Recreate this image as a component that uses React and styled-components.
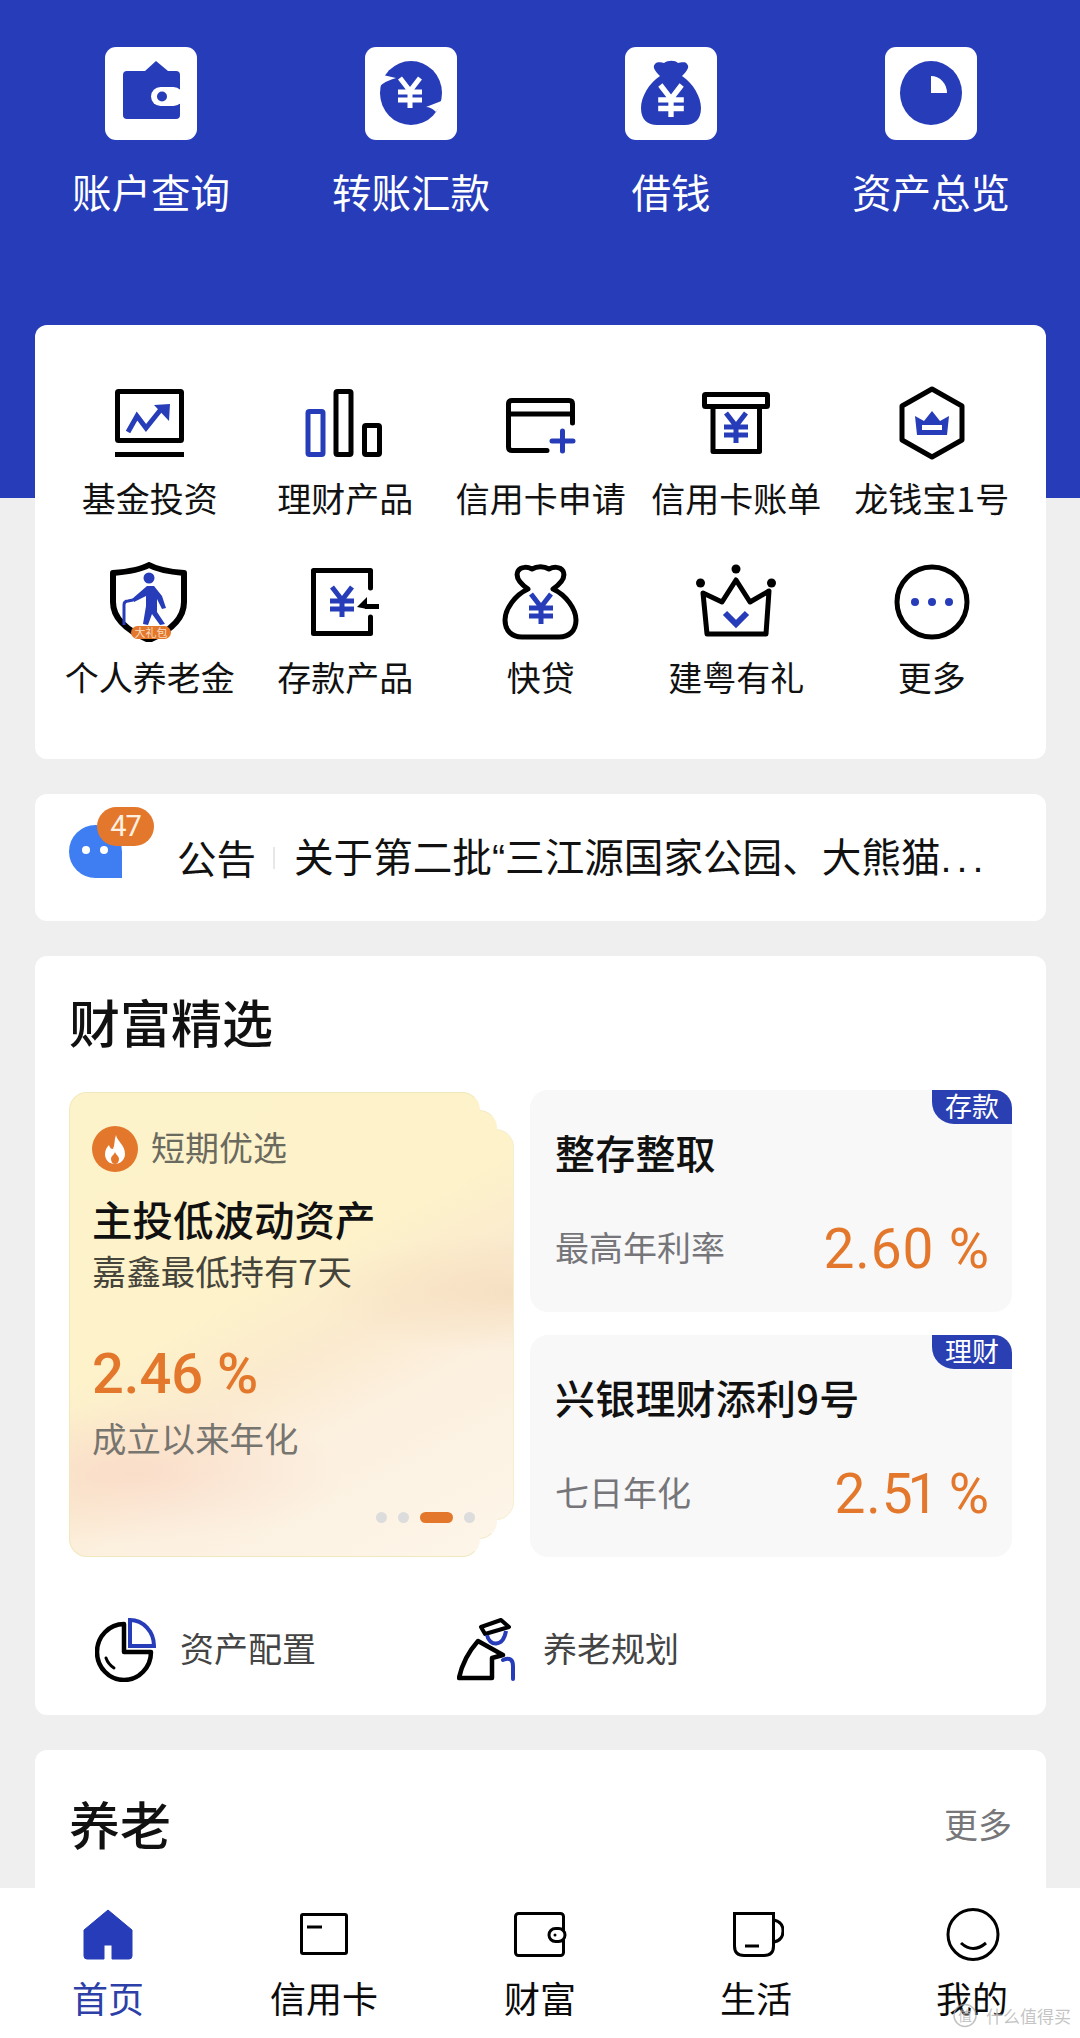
import React from 'react'
import styled, { createGlobalStyle, css } from 'styled-components'

const BLUE = '#263cb8'
const INK = '#0b0b0b'
const ORANGE = '#e3782c'

const GlobalStyle = createGlobalStyle`
  html, body {
    margin: 0;
    padding: 0;
    overflow: hidden;
  }
  body {
    font-family: "Noto Sans CJK SC", "Noto Sans", sans-serif;
  }
`

const Page = styled.div`
  position: relative;
  width: 1080px;
  height: 2038px;
  overflow: hidden;
  padding-top: 47px;
  box-sizing: border-box;
  background: linear-gradient(${BLUE} 0, ${BLUE} 498px, #efefef 498px);
`

const QuickRow = styled.div`
  display: grid;
  grid-template-columns: repeat(4, 260px);
  padding-left: 21px;
  margin-bottom: 112.5px;
`

const QuickItem = styled.div`
  display: flex;
  flex-direction: column;
  align-items: center;
`

const QuickTile = styled.div`
  width: 92px;
  height: 93px;
  border-radius: 11px;
  background: #fff;
  margin-bottom: 28.5px;

  svg {
    display: block;
  }
`

const QuickLabel = styled.div`
  font-size: 39.5px;
  line-height: 44px;
  color: #fff;
  white-space: nowrap;
`

const Card = styled.section`
  margin: 0 34px 35px 35px;
  width: 1011px;
  border-radius: 12px;
  background: #fff;
  box-sizing: border-box;
`

const MenuCard = styled(Card)`
  display: grid;
  grid-template-columns: repeat(5, 195.5px);
  row-gap: 42.5px;
  padding: 58px 0 0 17px;
  height: 434px;
  align-content: start;
`

const MenuItem = styled.div`
  display: flex;
  flex-direction: column;
  align-items: center;
  gap: 12.5px;

  svg {
    display: block;
  }
`

const MenuLabel = styled.div`
  font-size: 34px;
  line-height: 44px;
  color: #111;
  white-space: nowrap;
`

const NoticeCard = styled(Card)`
  display: flex;
  align-items: center;
  height: 127px;
  padding-left: 34px;
`

const Bubble = styled.div`
  position: relative;
  flex: none;
  width: 53px;
  height: 53px;
  margin: 31px 55px 0 0;
  border-radius: 50% 50% 0 50%;
  background: #3f7ef2;
  align-self: flex-start;

  &::before,
  &::after {
    content: '';
    position: absolute;
    top: 21px;
    width: 8px;
    height: 8px;
    border-radius: 50%;
    background: #fff;
  }
  &::before {
    left: 13px;
  }
  &::after {
    left: 31px;
  }
`

const Badge = styled.div`
  position: absolute;
  z-index: 1;
  left: 28px;
  top: -18px;
  width: 57px;
  height: 39px;
  border-radius: 20px;
  background: ${ORANGE};
  color: #fdf0e2;
  font-family: "Roboto", sans-serif;
  font-size: 29px;
  letter-spacing: -1px;
  line-height: 39px;
  text-align: center;
`

const NoticeTag = styled.div`
  font-size: 39.5px;
  line-height: 50px;
  padding-bottom: 2px;
  color: #111;
  white-space: nowrap;
`

const NoticeBar = styled.div`
  flex: none;
  width: 2px;
  height: 22px;
  margin: 0 19px 0 17px;
  background: #e8e8e8;
`

const NoticeText = styled.div`
  font-size: 39.6px;
  line-height: 50px;
  padding-bottom: 2px;
  color: #111;
  white-space: nowrap;
`

const Quote = styled.span`
  font-family: "Liberation Sans", sans-serif;
`

const Dots = styled.span`
  font-family: "Liberation Sans", sans-serif;
  letter-spacing: 5px;
`

const WealthCard = styled(Card)`
  height: 759px;
  padding: 33px 34px 0 34px;
`

const CardTitle = styled.h2`
  margin: 0;
  font-size: 51px;
  font-weight: 500;
  line-height: 64px;
  color: #111;
`

const Picks = styled.div`
  display: grid;
  grid-template-columns: 411px 482px;
  column-gap: 50px;
  margin-top: 37px;
`

// one gradient shared by the card and the two sheets behind it, so the colour runs on across them
const promoFill = css`
  background-image:
    radial-gradient(ellipse 210px 70px at 15% 82%, rgba(249, 213, 196, 0.6), transparent),
    radial-gradient(ellipse 200px 60px at 100% 43%, rgba(244, 218, 186, 0.7), transparent),
    linear-gradient(152deg, #fdf3ca 0%, #fdf2ca 42%, #fbeacf 56%, #fcf0df 68%, #fdf6ea 100%);
  background-size: 445px 465px;
  background-repeat: no-repeat;
`

const PromoStack = styled.div`
  position: relative;
  isolation: isolate;
  height: 465px;
  margin-top: 2px;

  &::before,
  &::after {
    content: '';
    position: absolute;
    left: 0;
    border-radius: 18px;
    box-sizing: border-box;
    ${promoFill}
  }
  &::before {
    z-index: -1;
    top: 18px;
    width: 428px;
    height: 429px;
    background-position: 0 -18px;
    border: 1px solid #f3ebc6;
    border-right-color: transparent;
  }
  &::after {
    z-index: -2;
    top: 37px;
    width: 445px;
    height: 391px;
    background-position: 0 -37px;
    border: 1px solid #f5eecf;
  }
`

const Promo = styled.div`
  position: relative;
  height: 465px;
  padding: 33px 4px 0 22px;
  box-sizing: border-box;
  border: 1px solid #f1e8bd;
  border-right-color: transparent;
  border-radius: 18px;
  ${promoFill}
`

const PromoHead = styled.div`
  display: flex;
  align-items: center;
  gap: 13px;
  height: 46px;
  font-size: 34px;
  color: #6b6a5f;

  svg {
    display: block;
    flex: none;
  }
`

const RaisedText = styled.span`
  padding-bottom: 5px;
`

const PromoTitle = styled.div`
  margin-top: 21px;
  font-size: 40.5px;
  font-weight: 500;
  line-height: 52px;
  color: #111;
`

const PromoSub = styled.div`
  margin-top: 3px;
  font-size: 34.4px;
  line-height: 44px;
  color: #45443a;
`

const PromoRate = styled.div`
  margin-top: 46.5px;
  font-family: "Roboto", sans-serif;
  font-size: 56px;
  font-weight: 500;
  line-height: 70px;
  color: ${ORANGE};
`

const PromoCaption = styled.div`
  margin-top: 6.5px;
  font-size: 34.4px;
  line-height: 44px;
  color: #77756f;
`

const Pager = styled.div`
  display: flex;
  justify-content: flex-end;
  align-items: center;
  gap: 11px;
  margin-top: 52.5px;
`

const PagerDot = styled.span`
  width: ${(p) => (p.$active ? '33px' : '11px')};
  height: 11px;
  border-radius: 6px;
  background: ${(p) => (p.$active ? ORANGE : '#dcdcdc')};
`

const RateStack = styled.div`
  display: flex;
  flex-direction: column;
  gap: 23px;
`

const RateCard = styled.div`
  position: relative;
  height: 222px;
  padding: 35.5px 22px 0 25px;
  box-sizing: border-box;
  border-radius: 18px;
  background: #f8f8f8;
`

const RateTag = styled.div`
  position: absolute;
  top: 0;
  right: 0;
  width: 80px;
  height: 34px;
  border-radius: 0 18px 0 22px;
  background: #2a3fb2;
  color: #fff;
  font-size: 27px;
  line-height: 32px;
  text-align: center;
`

const RateTitle = styled.div`
  font-size: 40px;
  font-weight: 500;
  letter-spacing: 0.2px;
  line-height: 52px;
  color: #111;
`

const RateRow = styled.div`
  display: flex;
  justify-content: space-between;
  align-items: center;
  margin-top: 36.5px;
`

const RateLabel = styled.div`
  font-size: 34px;
  line-height: 44px;
  padding-bottom: 5px;
  color: #76767a;
`

const RateValue = styled.div`
  font-family: "Roboto", sans-serif;
  font-size: 55px;
  letter-spacing: 0.9px;
  line-height: 70px;
  color: ${ORANGE};
`

const NarrowOne = styled.span`
  margin: 0 -5px 0 -6px;
`

const LinkRow = styled.div`
  display: grid;
  grid-template-columns: 362px 362px;
  margin-top: 61px;
  padding-left: 26px;
`

const LinkItem = styled.div`
  display: flex;
  align-items: center;
  gap: ${(p) => p.$gap}px;
  font-size: 34px;
  color: #444;

  svg {
    display: block;
    flex: none;
  }
`

const PensionCard = styled(Card)`
  height: 300px;
  padding: 41px 34px 0 34px;
`

const PensionHead = styled.div`
  display: flex;
  justify-content: space-between;
  align-items: center;
`

const MoreLink = styled.div`
  font-size: 34px;
  color: #77777a;
`

const Nav = styled.nav`
  position: absolute;
  left: 0;
  bottom: 0;
  display: grid;
  grid-template-columns: repeat(5, 216px);
  width: 1080px;
  height: 150px;
  padding-top: 18px;
  box-sizing: border-box;
  background: #fff;
`

const NavItem = styled.div`
  display: flex;
  flex-direction: column;
  align-items: center;
  gap: 13px;
  font-size: 36px;
  line-height: 44px;
  color: ${(p) => (p.$active ? '#2c40a8' : INK)};

  svg {
    display: block;
  }
`

const Watermark = styled.div`
  position: absolute;
  right: 9px;
  bottom: 10px;
  display: flex;
  align-items: center;
  gap: 9px;
  font-size: 17px;
  line-height: 22px;
  color: rgba(170, 170, 170, 0.7);
  text-shadow: 0 0 2px #fff;
`

const Yen = ({ x, y, h = 30, color = BLUE, sw = 5 }) => {
  const s = h / 30
  return (
    <path
      transform={`translate(${x} ${y}) scale(${s})`}
      d="M-10 -15 L0 -2 L10 -15 M-12 -1 H12 M-12 7 H12 M0 -2 V15"
      fill="none"
      stroke={color}
      strokeWidth={sw}
    />
  )
}

const TileIcon = ({ children }) => (
  <svg width="92" height="93" viewBox="0 0 92 93">
    {children}
  </svg>
)

const WalletTile = () => (
  <TileIcon>
    <path d="M51 14 L63 24 H40 Z" fill={BLUE} />
    <rect x="18" y="24" width="57" height="48" rx="4" fill={BLUE} />
    <rect x="46" y="40" width="32" height="19" rx="9.5" fill="#fff" />
    <circle cx="57" cy="49.5" r="5" fill={BLUE} />
  </TileIcon>
)

const TransferTile = () => (
  <TileIcon>
    <ellipse cx="46" cy="46" rx="31" ry="32" fill={BLUE} />
    <path d="M31 31 L18 28 L12 41 Q22 33 31 31 Z" fill="#fff" />
    <path d="M61 60 L79 53 L71 65 Q66 60 61 60 Z" fill="#fff" />
    <Yen x={45} y={46} color="#fff" sw={5} />
  </TileIcon>
)

const BagTile = () => (
  <TileIcon>
    <path
      d="M35 29 C30 24 27 20 30 17 C33 14 37 16 39 16 C43 13 50 13 53 16 C55 16 60 14 62 17 C65 20 62 24 57 29 C68 36 76 50 76 61 C76 73 69 78 60 78 H32 C23 78 16 73 16 61 C16 50 24 36 35 29 Z"
      fill={BLUE}
    />
    <Yen x={46} y={54} h={32} color="#fff" sw={5} />
  </TileIcon>
)

const PieTile = () => (
  <TileIcon>
    <ellipse cx="46" cy="46" rx="31" ry="32" fill={BLUE} />
    <path d="M46 29 A16 17 0 0 1 62 46 H46 Z" fill="#fff" />
  </TileIcon>
)

const MenuIcon = ({ children }) => (
  <svg width="80" height="80" viewBox="0 0 80 80" fill="none">
    {children}
  </svg>
)

const ChartIcon = () => (
  <MenuIcon>
    <rect x="7.5" y="8.5" width="64" height="49" rx="1" stroke="#000" strokeWidth="5" />
    <rect x="5" y="69" width="69" height="5" fill="#000" />
    <path d="M18 49 L27 33 L36 45 L52 25" stroke={BLUE} strokeWidth="5" />
    <path d="M44 22 L60 21 L59 38 Z" fill={BLUE} />
  </MenuIcon>
)

const BarsIcon = () => (
  <MenuIcon>
    <rect x="3" y="28.5" width="15" height="43" rx="1.5" stroke={BLUE} strokeWidth="5" />
    <rect x="31" y="8.5" width="15" height="63" rx="1.5" stroke="#000" strokeWidth="5" />
    <rect x="59.5" y="42.5" width="15" height="29" rx="1.5" stroke="#000" strokeWidth="5" />
  </MenuIcon>
)

const CardPlusIcon = () => (
  <MenuIcon>
    <path
      d="M46 67.5 H11 Q7.5 67.5 7.5 64 V21 Q7.5 17.5 11 17.5 H68 Q71.5 17.5 71.5 21 V40 M7.5 31 H71.5"
      stroke="#000"
      strokeWidth="5"
      strokeLinecap="round"
    />
    <path d="M51 58 H72 M61.5 48 V68" stroke={BLUE} strokeWidth="5" strokeLinecap="round" />
  </MenuIcon>
)

const BillIcon = () => (
  <MenuIcon>
    <rect x="8.5" y="11.5" width="63" height="12" rx="1" stroke="#000" strokeWidth="5" />
    <path d="M17 24 V68.5 H63.5 V24" stroke="#000" strokeWidth="5" strokeLinejoin="round" />
    <Yen x={40} y={45} color={BLUE} sw={5} />
  </MenuIcon>
)

const HexIcon = () => (
  <MenuIcon>
    <path
      d="M40 6 L70 23 V57 L40 74 L10 57 V23 Z"
      stroke="#000"
      strokeWidth="5"
      strokeLinejoin="round"
    />
    <path d="M23 33 L32 38 L40 28 L48 38 L57 33 L55 52 H25 Z" fill={BLUE} />
    <rect x="30" y="42" width="20" height="5" fill="#fff" />
  </MenuIcon>
)

const ShieldIcon = () => (
  <MenuIcon>
    <path
      d="M39 3 C48 8 62 10 74 11 V40 C74 58 58 70 39 78 C20 70 3 58 3 40 V11 C15 10 30 8 39 3 Z"
      stroke="#000"
      strokeWidth="6"
      strokeLinejoin="round"
    />
    <circle cx="39" cy="16" r="5.5" fill={BLUE} />
    <path
      d="M37 24 H44 L52 34 L56 46 L52 47 L47 37 L47 50 L55 62 L50 63 L42 52 L38 63 L33 62 L36 44 L36 34 L24 40 L22 37 Z"
      fill={BLUE}
    />
    <path d="M14 63 V43 Q14 39 18 39 L23 38" stroke={BLUE} strokeWidth="3" />
    <rect x="21" y="64" width="40" height="13" rx="6.5" fill={ORANGE} />
    <text x="41" y="74.5" fontSize="11" fill="#f9dcc0" textAnchor="middle">
      大礼包
    </text>
  </MenuIcon>
)

const DepositIcon = () => (
  <MenuIcon>
    <path
      d="M65.5 26 V8.5 H8.5 V71.5 H65.5 V55"
      stroke="#000"
      strokeWidth="5"
      strokeLinejoin="round"
      strokeLinecap="round"
    />
    <Yen x={37} y={40} color={BLUE} sw={5} />
    <path d="M60 44.5 H74" stroke="#000" strokeWidth="5" />
    <path d="M52 45 L62 35 V47 Z" fill="#000" />
  </MenuIcon>
)

const BagIcon = () => (
  <MenuIcon>
    <path
      d="M27 27 C20 22 14 15 17 9 C20 4 27 5 31 7 C36 4 43 4 48 7 C52 5 59 4 62 9 C65 15 59 22 52 27 C65 33 75 47 75 58 C75 69 68 75 58 75 H21 C11 75 4 69 4 58 C4 47 14 33 27 27 Z"
      stroke="#000"
      strokeWidth="5"
      strokeLinejoin="round"
    />
    <Yen x={40} y={47} color={BLUE} sw={5} />
  </MenuIcon>
)

const CrownIcon = () => (
  <MenuIcon>
    <circle cx="40" cy="7" r="4.5" fill="#000" />
    <circle cx="4.5" cy="21" r="4.5" fill="#000" />
    <circle cx="75.5" cy="21" r="4.5" fill="#000" />
    <path
      d="M7 31 L26 40 L40 18 L54 40 L73 29 L70 72 H11 Z"
      stroke="#000"
      strokeWidth="5"
      strokeLinejoin="round"
    />
    <path d="M29 51 L40 62 L51 51" stroke={BLUE} strokeWidth="6" />
  </MenuIcon>
)

const MoreIcon = () => (
  <MenuIcon>
    <circle cx="40" cy="40" r="35" stroke="#000" strokeWidth="5" />
    <circle cx="23" cy="40" r="4" fill={BLUE} />
    <circle cx="40" cy="40" r="4" fill={BLUE} />
    <circle cx="57" cy="40" r="4" fill={BLUE} />
  </MenuIcon>
)

const FlameBadge = () => (
  <svg width="46" height="46" viewBox="0 0 46 46">
    <circle cx="23" cy="23" r="23" fill={ORANGE} />
    <path
      d="M24 9 C25 15 33 19 33 28 C33 34 28 38 23 38 C17 38 13 34 13 28 C13 24 15 21 17 19 C18 22 19 23 21 23 C23 19 22 14 24 9 Z"
      fill="#fff"
    />
    <path d="M23 26 C24 29 27 30 27 33 C27 36 25 38 23 38 C21 38 19 36 19 33 C19 30 22 29 23 26 Z" fill={ORANGE} />
  </svg>
)

const AllocIcon = () => (
  <svg width="62" height="64" viewBox="0 0 62 64" fill="none">
    <path d="M29 6 A27 28 0 1 0 56 34 H29 Z" stroke="#000" strokeWidth="4.5" strokeLinejoin="round" />
    <path d="M35 2 A24 26 0 0 1 59 28 H35 Z" stroke={BLUE} strokeWidth="4" />
    <path d="M11 40 Q13 46 19 50" stroke="#000" strokeWidth="3" strokeLinecap="round" />
  </svg>
)

const PlanIcon = () => (
  <svg width="60" height="64" viewBox="0 0 60 64" fill="none">
    <path d="M24 9 L44 2 L52 9 L28 16 Z" fill="#fff" stroke="#000" strokeWidth="4" strokeLinejoin="round" />
    <path d="M30 17 C32 28 46 30 49 13" stroke={BLUE} strokeWidth="4" />
    <path
      d="M21 23 C13 32 5 46 2 60 H35 V40 L46 37 Z"
      stroke="#000"
      strokeWidth="4.5"
      strokeLinejoin="round"
    />
    <path d="M46 42 Q56 38 56 48 V61" stroke={BLUE} strokeWidth="4" strokeLinecap="round" />
  </svg>
)

const NavIcon = ({ children }) => (
  <svg width="56" height="56" viewBox="0 0 56 56" fill="none">
    {children}
  </svg>
)

const HomeIcon = () => (
  <NavIcon>
    <path
      d="M28 4 L52 24 V50 Q52 53 49 53 H32 V39 H24 V53 H7 Q4 53 4 50 V24 Z"
      fill={BLUE}
      stroke={BLUE}
      strokeLinejoin="round"
    />
  </NavIcon>
)

const CreditIcon = () => (
  <NavIcon>
    <rect x="5.5" y="8.5" width="45" height="39" rx="1.5" stroke="#000" strokeWidth="3" />
    <path d="M11 21 H26" stroke="#000" strokeWidth="3" />
  </NavIcon>
)

const WalletIcon = () => (
  <NavIcon>
    <rect x="3.5" y="7.5" width="48" height="42" rx="3" stroke="#000" strokeWidth="3" />
    <rect x="37" y="22.5" width="16" height="13" rx="6.5" fill="#fff" stroke="#000" strokeWidth="3" />
    <circle cx="43" cy="29" r="1.5" fill="#000" />
  </NavIcon>
)

const MugIcon = () => (
  <NavIcon>
    <path
      d="M6.5 7.5 H45.5 V40 Q45.5 49.5 36 49.5 H16 Q6.5 49.5 6.5 40 Z"
      stroke="#000"
      strokeWidth="3"
    />
    <path d="M46 14 Q55 16 55 25 Q55 34 46 36" stroke="#000" strokeWidth="3" />
    <path d="M17 40 H31" stroke="#000" strokeWidth="3" />
  </NavIcon>
)

const SmileIcon = () => (
  <NavIcon>
    <circle cx="29" cy="28.5" r="25" stroke="#000" strokeWidth="3" />
    <path d="M17 37 Q29 48 42 37" stroke="#000" strokeWidth="3" />
  </NavIcon>
)

const WatermarkLogo = () => (
  <svg width="24" height="25" viewBox="0 0 24 25" fill="none">
    <circle cx="12" cy="12.5" r="11" stroke="rgba(170,170,170,0.7)" strokeWidth="1.5" />
    <text x="12" y="18" fontSize="14" fill="rgba(170,170,170,0.7)" textAnchor="middle">
      值
    </text>
  </svg>
)

const quickItems = [
  { label: '账户查询', Icon: WalletTile },
  { label: '转账汇款', Icon: TransferTile },
  { label: '借钱', Icon: BagTile },
  { label: '资产总览', Icon: PieTile },
]

const menuItems = [
  { label: '基金投资', Icon: ChartIcon },
  { label: '理财产品', Icon: BarsIcon },
  { label: '信用卡申请', Icon: CardPlusIcon },
  { label: '信用卡账单', Icon: BillIcon },
  { label: '龙钱宝1号', Icon: HexIcon },
  { label: '个人养老金', Icon: ShieldIcon },
  { label: '存款产品', Icon: DepositIcon },
  { label: '快贷', Icon: BagIcon },
  { label: '建粤有礼', Icon: CrownIcon },
  { label: '更多', Icon: MoreIcon },
]

const rateCards = [
  { tag: '存款', title: '整存整取', label: '最高年利率', value: '2.60 %' },
  {
    tag: '理财',
    title: '兴银理财添利9号',
    label: '七日年化',
    value: (
      <>
        2.5<NarrowOne>1</NarrowOne> %
      </>
    ),
  },
]

const navItems = [
  { label: '首页', Icon: HomeIcon, active: true },
  { label: '信用卡', Icon: CreditIcon },
  { label: '财富', Icon: WalletIcon },
  { label: '生活', Icon: MugIcon },
  { label: '我的', Icon: SmileIcon },
]

export default function App() {
  return (
    <Page lang="zh-CN">
      <GlobalStyle />

      <QuickRow>
        {quickItems.map(({ label, Icon }) => (
          <QuickItem key={label}>
            <QuickTile>
              <Icon />
            </QuickTile>
            <QuickLabel>{label}</QuickLabel>
          </QuickItem>
        ))}
      </QuickRow>

      <MenuCard>
        {menuItems.map(({ label, Icon }) => (
          <MenuItem key={label}>
            <Icon />
            <MenuLabel>{label}</MenuLabel>
          </MenuItem>
        ))}
      </MenuCard>

      <NoticeCard>
        <Bubble>
          <Badge>47</Badge>
        </Bubble>
        <NoticeTag>公告</NoticeTag>
        <NoticeBar />
        <NoticeText>
          关于第二批<Quote>“</Quote>三江源国家公园、大熊猫<Dots>...</Dots>
        </NoticeText>
      </NoticeCard>

      <WealthCard>
        <CardTitle>财富精选</CardTitle>
        <Picks>
          <PromoStack>
            <Promo>
              <PromoHead>
                <FlameBadge />
                <RaisedText>短期优选</RaisedText>
              </PromoHead>
              <PromoTitle>主投低波动资产</PromoTitle>
              <PromoSub>嘉鑫最低持有7天</PromoSub>
              <PromoRate>2.46 %</PromoRate>
              <PromoCaption>成立以来年化</PromoCaption>
              <Pager>
                <PagerDot />
                <PagerDot />
                <PagerDot $active />
                <PagerDot />
              </Pager>
            </Promo>
          </PromoStack>
          <RateStack>
            {rateCards.map((c) => (
              <RateCard key={c.tag}>
                <RateTag>{c.tag}</RateTag>
                <RateTitle>{c.title}</RateTitle>
                <RateRow>
                  <RateLabel>{c.label}</RateLabel>
                  <RateValue>{c.value}</RateValue>
                </RateRow>
              </RateCard>
            ))}
          </RateStack>
        </Picks>
        <LinkRow>
          <LinkItem $gap={23}>
            <AllocIcon />
            <RaisedText>资产配置</RaisedText>
          </LinkItem>
          <LinkItem $gap={26}>
            <PlanIcon />
            <RaisedText>养老规划</RaisedText>
          </LinkItem>
        </LinkRow>
      </WealthCard>

      <PensionCard>
        <PensionHead>
          <CardTitle>养老</CardTitle>
          <MoreLink>更多</MoreLink>
        </PensionHead>
      </PensionCard>

      <Nav>
        {navItems.map(({ label, Icon, active }) => (
          <NavItem key={label} $active={active}>
            <Icon />
            {label}
          </NavItem>
        ))}
      </Nav>

      <Watermark>
        <WatermarkLogo />
        什么值得买
      </Watermark>
    </Page>
  )
}
